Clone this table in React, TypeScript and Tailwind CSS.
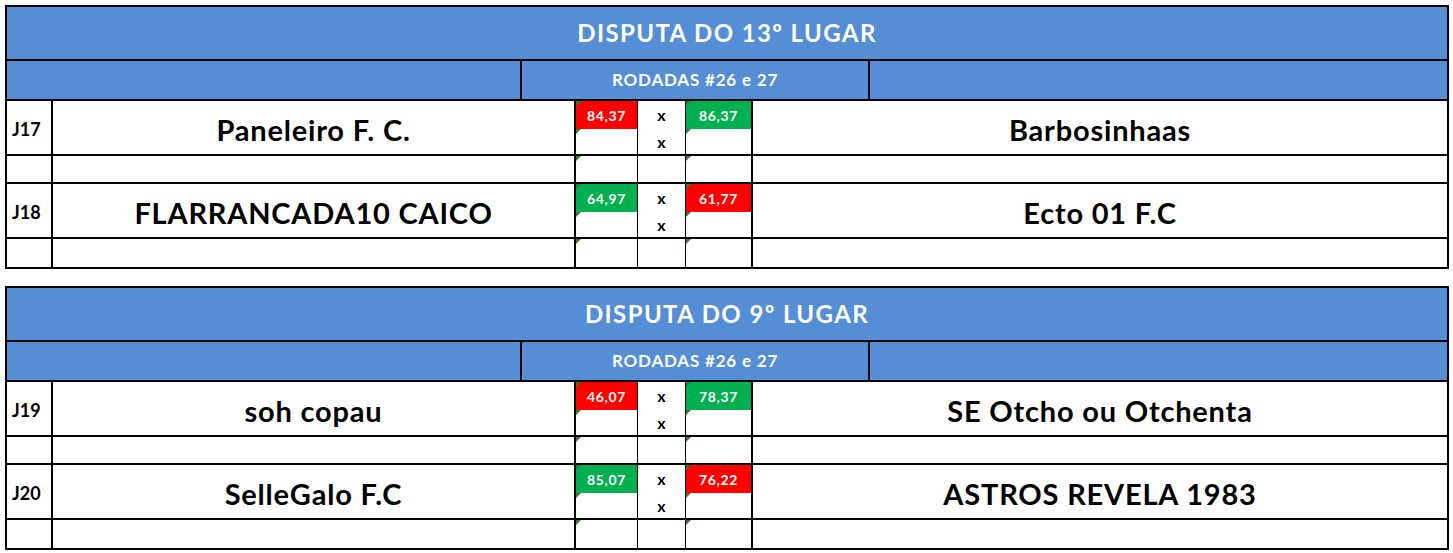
import type { ReactNode } from 'react';

type Match = {
  id: string;
  home: string;
  away: string;
  homeScore: string;
  awayScore: string;
};

type Block = {
  title: string;
  matches: Match[];
};

const blocks: Block[] = [
  {
    title: 'DISPUTA DO 13º LUGAR',
    matches: [
      { id: 'J17', home: 'Paneleiro F. C.', away: 'Barbosinhaas', homeScore: '84,37', awayScore: '86,37' },
      { id: 'J18', home: 'FLARRANCADA10 CAICO', away: 'Ecto 01 F.C', homeScore: '64,97', awayScore: '61,77' },
    ],
  },
  {
    title: 'DISPUTA DO 9º LUGAR',
    matches: [
      { id: 'J19', home: 'soh copau', away: 'SE Otcho ou Otchenta', homeScore: '46,07', awayScore: '78,37' },
      { id: 'J20', home: 'SelleGalo F.C', away: 'ASTROS REVELA 1983', homeScore: '85,07', awayScore: '76,22' },
    ],
  },
];

function toNum(s: string) {
  return parseFloat(s.replace(',', '.'));
}

// little green corner mark excel puts on "number stored as text" cells
function Flag() {
  return <span className="absolute left-0 top-0 w-0 h-0 border-t-[5px] border-r-[5px] border-t-[#2e7d32] border-r-transparent" />;
}

function ScoreCell({ value, win }: { value?: string; win?: boolean }) {
  const bg = value === undefined ? 'bg-white' : win ? 'bg-[#00b050]' : 'bg-[#ff0000]';
  return (
    <div className={ `relative flex items-center justify-center text-white font-bold text-[14px] tracking-[0.6px] ${ bg }` }>
      <Flag/>
      { value }
    </div>
  );
}

function Cell({ children, className = '' }: { children?: ReactNode; className?: string }) {
  return <div className={ `flex items-center justify-center ${ className }` }>{ children }</div>;
}

function MatchRows({ match, isLast }: { match: Match; isLast: boolean }) {
  const homeWin = toNum(match.homeScore) > toNum(match.awayScore);
  const bottom = isLast ? '' : 'border-b-2 border-black';

  return (
    <div className="grid grid-cols-[46px_523px_62px_48px_67px_1fr] grid-rows-[28px_27px_28px]">
      {/* label + teams span the two score lines */ }
      <Cell className="row-span-2 justify-start pl-[5px] pt-[3px] border-r-2 border-b-2 border-black text-[18px] font-bold">
        { match.id }
      </Cell>
      <Cell className="row-span-2 pt-[4px] border-r-2 border-b-2 border-black text-[29px] tracking-[0.8px] font-bold">
        { match.home }
      </Cell>
      <div className="border-r border-black grid">
        <ScoreCell value={ match.homeScore } win={ homeWin }/>
      </div>
      <Cell className="border-r border-black text-[16px] font-bold">x</Cell>
      <div className="border-r-2 border-black grid">
        <ScoreCell value={ match.awayScore } win={ !homeWin }/>
      </div>
      <Cell className="row-span-2 pt-[4px] border-b-2 border-black text-[29px] tracking-[0.8px] font-bold">
        { match.away }
      </Cell>

      <div className="border-r border-b-2 border-black grid"><ScoreCell/></div>
      <Cell className="border-r border-b-2 border-black text-[16px] font-bold">x</Cell>
      <div className="border-r-2 border-b-2 border-black grid"><ScoreCell/></div>

      {/* empty spacer line */ }
      <div className={ `border-r-2 border-black ${ bottom }` }/>
      <div className={ `border-r-2 border-black ${ bottom }` }/>
      <div className={ `relative border-r border-black ${ bottom }` }><Flag/></div>
      <div className={ `border-r border-black ${ bottom }` }/>
      <div className={ `relative border-r-2 border-black ${ bottom }` }><Flag/></div>
      <div className={ bottom }/>
    </div>
  );
}

function BlockTable({ block }: { block: Block }) {
  return (
    <div className="w-[1444px] border-2 border-black bg-white">
      <div className="h-[54px] bg-[#558ed5] border-b-2 border-black flex items-center justify-center text-white font-bold text-[24px] tracking-[1.4px]">
        { block.title }
      </div>
      <div className="h-[40px] bg-[#558ed5] border-b-2 border-black flex">
        <div className="w-[513px]"/>
        <div className="w-[350px] border-x-2 border-black flex items-center justify-center text-white font-bold text-[17px] tracking-[0.8px]">
          RODADAS #26 e 27
        </div>
        <div className="flex-1"/>
      </div>
      {
        block.matches.map((m, i) => (
          <MatchRows key={ m.id } match={ m } isLast={ i === block.matches.length - 1 }/>
        ))
      }
    </div>
  );
}

export default function App() {
  return (
    <div className="w-[1453px] h-[553px] bg-white pl-[5px] pt-[5px] flex flex-col gap-[17px] text-black font-['Lato',sans-serif]">
      {
        blocks.map((b) => <BlockTable key={ b.title } block={ b }/>)
      }
    </div>
  );
}
